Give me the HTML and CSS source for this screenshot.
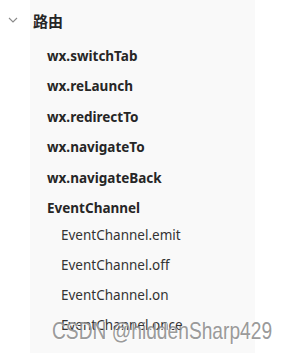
FILE: index.html
```html
<!DOCTYPE html>
<html>
<head>
    <title>路由</title>
    <link rel="stylesheet" href="styles.css">
</head>
<body>
    <div class="tree">
        <div class="group-title">
            <svg class="chevron" width="10" height="6" viewBox="0 0 10 6"><path d="M1 1 L5 5 L9 1" fill="none" stroke="#8a8a8a" stroke-width="1.1"/></svg>
            <span>路由</span>
        </div>
        <div class="panel">
            <div class="item">wx.switchTab</div>
            <div class="item">wx.reLaunch</div>
            <div class="item">wx.redirectTo</div>
            <div class="item">wx.navigateTo</div>
            <div class="item">wx.navigateBack</div>
            <div class="item">EventChannel</div>
            <div class="subs">
                <div class="sub">EventChannel.emit</div>
                <div class="sub">EventChannel.off</div>
                <div class="sub">EventChannel.on</div>
                <div class="sub">EventChannel.once</div>
            </div>
        </div>
    </div>
    <div class="watermark">CSDN @hiddenSharp429</div>
</body>
</html>
```
FILE: styles.css
```css
body {
    margin: 0;
    width: 288px;
    height: 353px;
    overflow: hidden;
    background-color: #fff;
    font-family: "Noto Sans", "Noto Sans CJK SC", sans-serif;
    color: #262626;
    position: relative;
}
.group-title {
    height: 40px;
    display: flex;
    align-items: center;
    font-size: 15px;
    font-weight: bold;
    background: linear-gradient(to right, #fff 30px, #f9f9f9 30px, #f9f9f9 255px, #fff 255px);
}
.chevron {
    margin-left: 8px;
    margin-right: 15px;
}
.panel {
    margin-left: 30px;
    width: 225px;
    background-color: #f9f9f9;
    padding-top: 1px;
    padding-bottom: 20px;
}
.item {
    height: 30.4px;
    line-height: 30.4px;
    padding-left: 17px;
    font-size: 13.5px;
    font-weight: bold;
}
.subs {
    margin-top: -3px;
}
.sub {
    height: 30px;
    line-height: 30px;
    padding-left: 31px;
    font-size: 13.5px;
    color: #333;
}
.watermark {
    position: absolute;
    left: 52px;
    top: 317px;
    white-space: nowrap;
    font-family: "Liberation Sans", sans-serif;
    font-size: 24px;
    line-height: 28px;
    color: rgba(128, 128, 128, 0.8);
    text-shadow: 1px 1px 0 rgba(255, 255, 255, 0.8);
    transform: scaleX(0.8);
    transform-origin: left top;
}
```
